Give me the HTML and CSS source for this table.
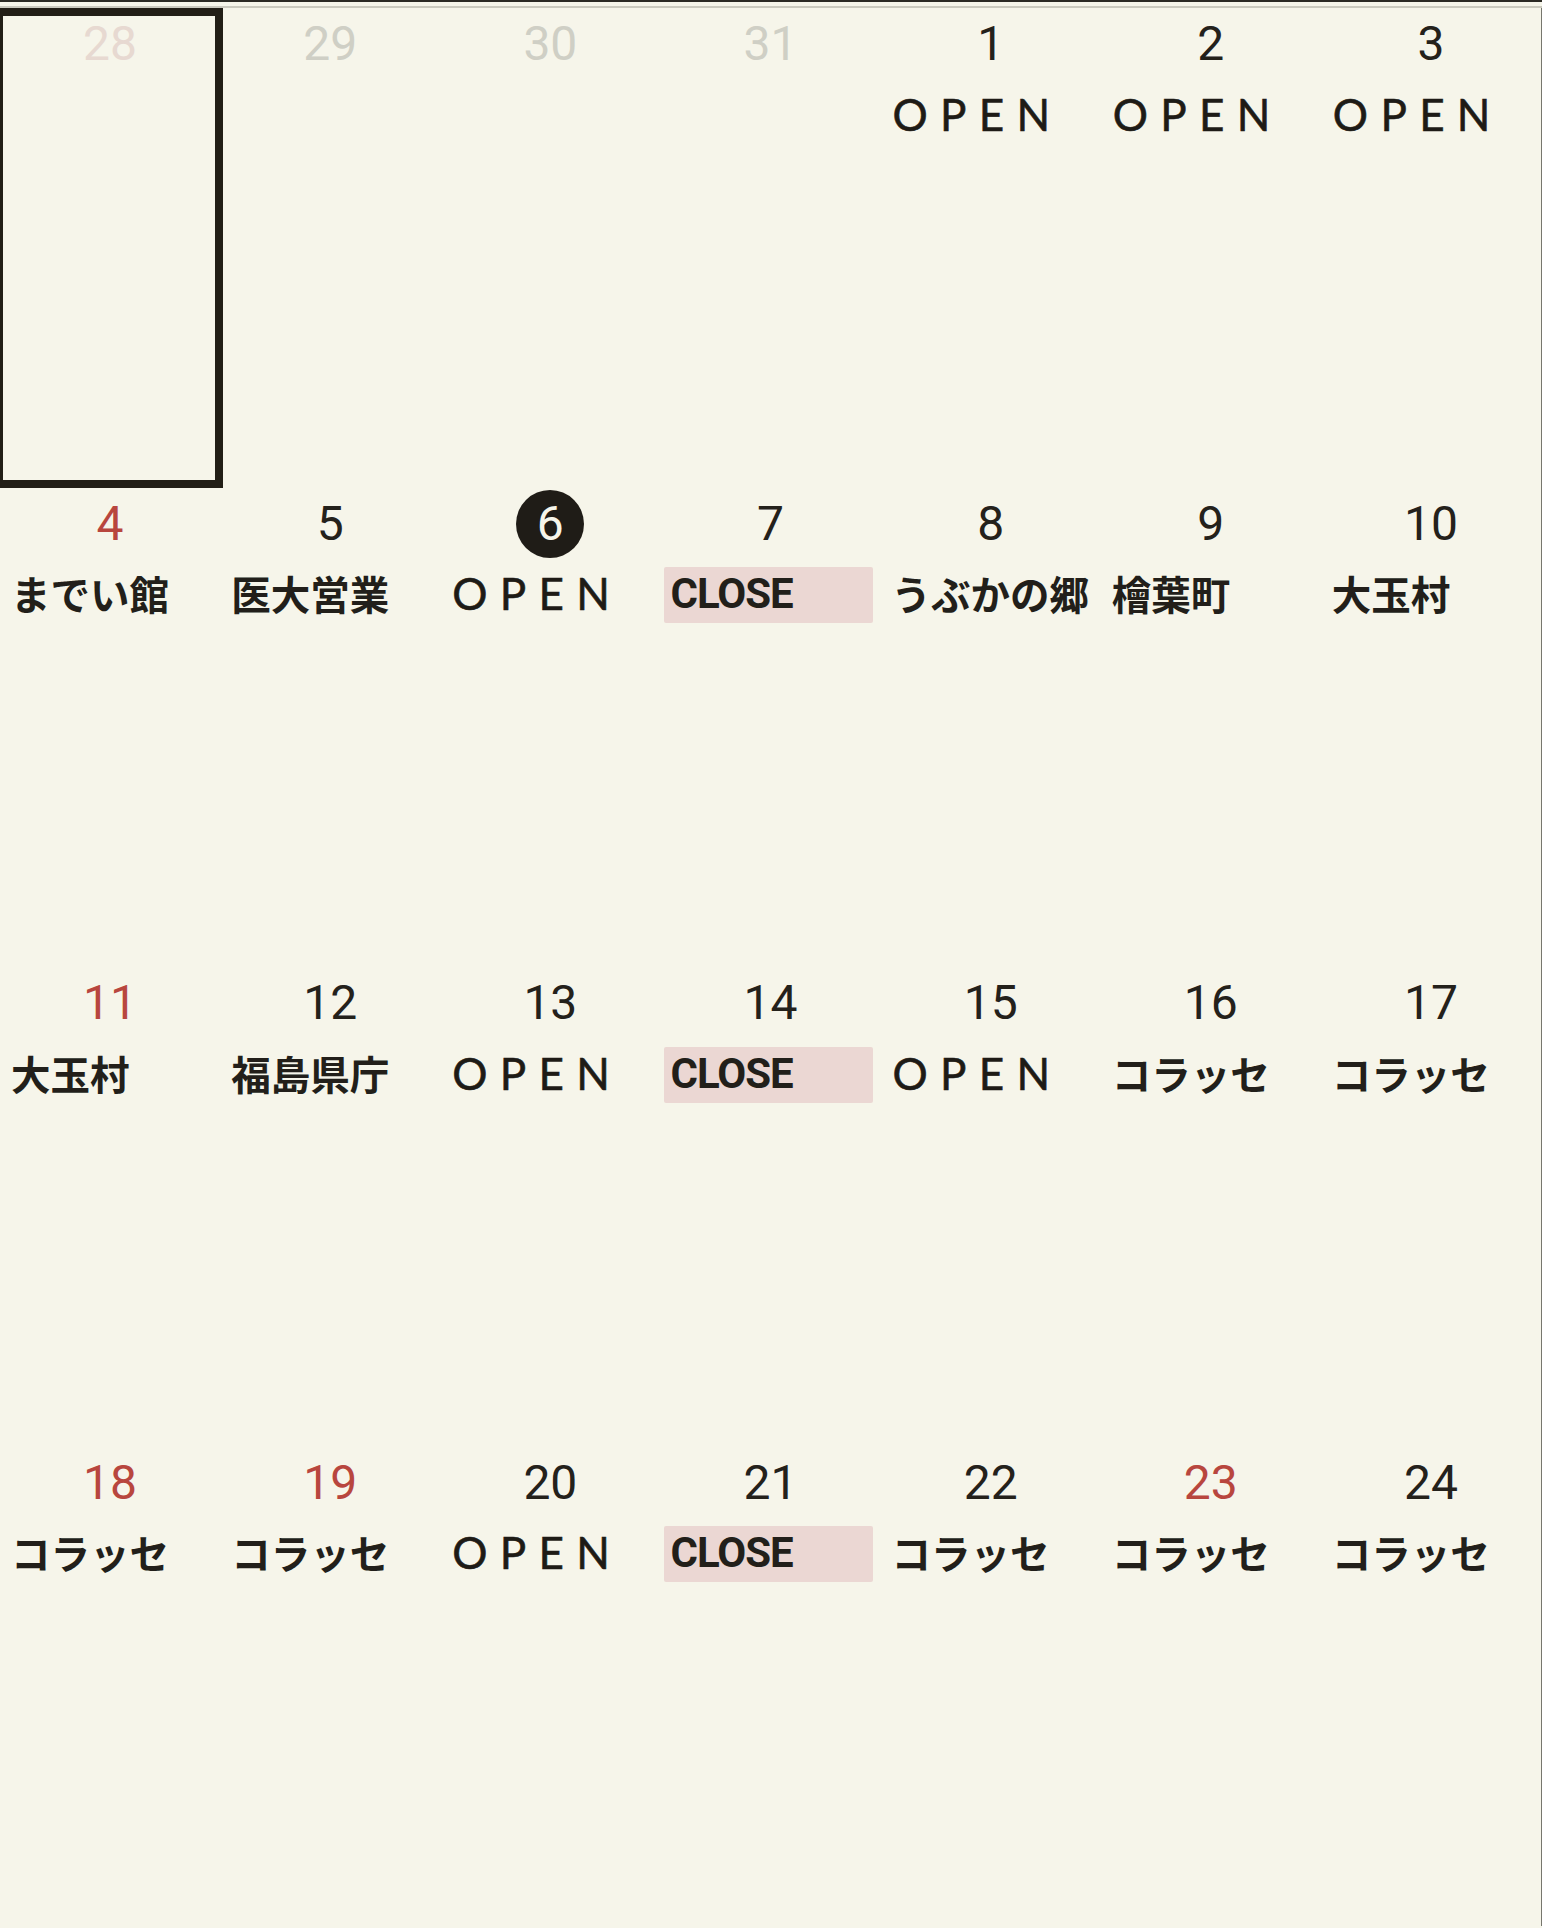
FILE: index.html
```html
<!DOCTYPE html>
<html lang="ja">
<head>
<meta charset="utf-8">
<title>Calendar</title>
<link rel="stylesheet" href="styles.css">
</head>
<body>
<div class="topbar"></div>
<div class="grid">
  <div class="cell selected"><div class="num faded-red">28</div></div>
  <div class="cell"><div class="num faded">29</div></div>
  <div class="cell"><div class="num faded">30</div></div>
  <div class="cell"><div class="num faded">31</div></div>
  <div class="cell"><div class="num">1</div><div class="label"><span class="open">OPEN</span></div></div>
  <div class="cell"><div class="num">2</div><div class="label"><span class="open">OPEN</span></div></div>
  <div class="cell"><div class="num">3</div><div class="label"><span class="open">OPEN</span></div></div>

  <div class="cell"><div class="num red">4</div><div class="label"><span class="jp">までい館</span></div></div>
  <div class="cell"><div class="num">5</div><div class="label"><span class="jp">医大営業</span></div></div>
  <div class="cell"><div class="num"><span class="today">6</span></div><div class="label"><span class="open">OPEN</span></div></div>
  <div class="cell"><div class="num">7</div><div class="label"><span class="close">CLOSE</span></div></div>
  <div class="cell"><div class="num">8</div><div class="label"><span class="jp">うぶかの郷</span></div></div>
  <div class="cell"><div class="num">9</div><div class="label"><span class="jp">檜葉町</span></div></div>
  <div class="cell"><div class="num">10</div><div class="label"><span class="jp">大玉村</span></div></div>

  <div class="cell"><div class="num red">11</div><div class="label"><span class="jp">大玉村</span></div></div>
  <div class="cell"><div class="num">12</div><div class="label"><span class="jp">福島県庁</span></div></div>
  <div class="cell"><div class="num">13</div><div class="label"><span class="open">OPEN</span></div></div>
  <div class="cell"><div class="num">14</div><div class="label"><span class="close">CLOSE</span></div></div>
  <div class="cell"><div class="num">15</div><div class="label"><span class="open">OPEN</span></div></div>
  <div class="cell"><div class="num">16</div><div class="label"><span class="jp">コラッセ</span></div></div>
  <div class="cell"><div class="num">17</div><div class="label"><span class="jp">コラッセ</span></div></div>

  <div class="cell"><div class="num red">18</div><div class="label"><span class="jp">コラッセ</span></div></div>
  <div class="cell"><div class="num red">19</div><div class="label"><span class="jp">コラッセ</span></div></div>
  <div class="cell"><div class="num">20</div><div class="label"><span class="open">OPEN</span></div></div>
  <div class="cell"><div class="num">21</div><div class="label"><span class="close">CLOSE</span></div></div>
  <div class="cell"><div class="num">22</div><div class="label"><span class="jp">コラッセ</span></div></div>
  <div class="cell"><div class="num red">23</div><div class="label"><span class="jp">コラッセ</span></div></div>
  <div class="cell"><div class="num">24</div><div class="label"><span class="jp">コラッセ</span></div></div>
</div>
</body>
</html>
```
FILE: styles.css
```css
html, body {
  margin: 0;
  padding: 0;
  background: #f6f5ea;
}
body {
  width: 1542px;
  height: 1928px;
  overflow: hidden;
  color: #24211b;
  font-family: Roboto, "Noto Sans CJK JP", sans-serif;
}
.topbar {
  height: 4px;
  border-top: 2px solid #2b2a24;
  border-bottom: 2px solid #cbcabf;
}
.grid {
  display: grid;
  grid-template-columns: repeat(7, 1fr);
  grid-auto-rows: 479.6px;
  border-right: 1px solid #77776e;
}
.cell {
  position: relative;
  display: flex;
  flex-direction: column;
  min-width: 0;
}
.cell.selected::after {
  content: "";
  position: absolute;
  left: -5px;
  right: -3px;
  top: 0;
  bottom: 0;
  border: 8px solid #221e16;
  z-index: 2;
}
.num {
  margin-top: 2px;
  height: 68px;
  line-height: 68px;
  text-align: center;
  font-family: Roboto, sans-serif;
  font-size: 48px;
  font-weight: 400;
  color: #24211b;
}
.num.red { color: #b8463e; }
.num.faded { color: #cfcfc5; }
.num.faded-red { color: #e7d9d1; }
.today {
  display: inline-block;
  width: 68px;
  height: 68px;
  border-radius: 50%;
  background: #1f1c17;
  color: #f6f5ea;
  line-height: 68px;
  text-align: center;
}
.label {
  margin-top: 9.5px;
  height: 56px;
  display: flex;
  align-items: center;
  padding-left: 11px;
  white-space: nowrap;
}
.open {
  font-family: Lato, sans-serif;
  font-size: 44px;
  font-weight: 400;
  letter-spacing: 0.28em;
  line-height: 56px;
  position: relative;
  top: -2px;
  left: 1px;
  color: #1e1b16;
  -webkit-text-stroke: 0.6px #1e1b16;
}
.jp {
  font-family: "Noto Sans CJK JP", sans-serif;
  font-size: 39.5px;
  font-weight: 700;
  line-height: 56px;
  position: relative;
  top: -2px;
  color: #221f1a;
}
.close {
  box-sizing: border-box;
  width: 209px;
  height: 56px;
  margin-left: -7px;
  padding-left: 6px;
  background: #ebd7d3;
  border-radius: 2px;
  font-family: Roboto, sans-serif;
  font-weight: 700;
  font-size: 42px;
  letter-spacing: -1px;
  line-height: 54px;
  color: #221f1a;
}
```
